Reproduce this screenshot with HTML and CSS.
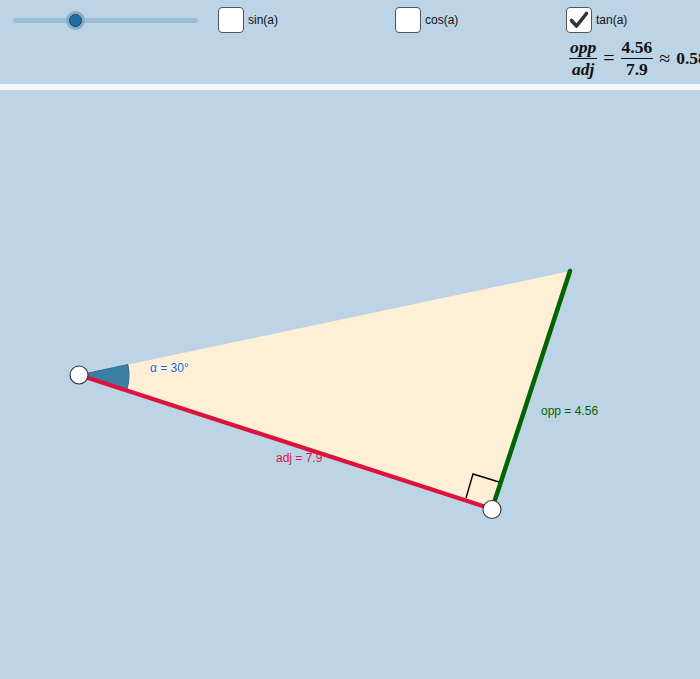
FILE: index.html
```html
<!DOCTYPE html>
<html lang="en">
<head>
<meta charset="utf-8">
<title>Tangent of an angle</title>
<link rel="stylesheet" href="styles.css">
</head>
<body>
<div class="app">
  <header class="toolbar">
    <div class="slider-cell">
      <div class="slider">
        <div class="slider-track"></div>
        <div class="slider-knob"></div>
      </div>
    </div>
    <label class="check check-sin">
      <span class="box"></span>
      <span class="check-label">sin(a)</span>
    </label>
    <label class="check check-cos">
      <span class="box"></span>
      <span class="check-label">cos(a)</span>
    </label>
    <div class="tan-cell">
      <label class="check">
        <span class="box checked">
          <svg viewBox="0 0 26 26" width="26" height="26"><path d="M5.5 13.5 L10.5 19 L20.5 6.5" fill="none" stroke="#333" stroke-width="3.6" stroke-linecap="round" stroke-linejoin="round"/></svg>
        </span>
        <span class="check-label">tan(a)</span>
      </label>
      <div class="formula">
        <span class="frac"><span class="num it">opp</span><span class="den it">adj</span></span>
        <span class="op">=</span>
        <span class="frac"><span class="num">4.56</span><span class="den">7.9</span></span>
        <span class="op">≈</span>
        <span class="val">0.58</span>
      </div>
    </div>
  </header>
  <div class="divider"></div>
  <svg class="canvas" viewBox="0 91 700 588" width="700" height="588">
    <polygon points="79,375 492,509 570,271" fill="#ffefd6"/>
    <path d="M79 375 L127.9 364.6 A50 50 0 0 1 126.6 390.4 Z" fill="#3d7fa4" stroke="#2c6a8c" stroke-width="1"/>
    <polyline points="466,498 473,474 499,482" fill="none" stroke="#000" stroke-width="1.4"/>
    <line x1="79" y1="375" x2="492" y2="509" stroke="#dc143c" stroke-width="4.2"/>
    <line x1="492" y1="509" x2="570" y2="271" stroke="#006400" stroke-width="4.5" stroke-linecap="round"/>
    <circle cx="79" cy="375" r="9" fill="#fff" stroke="#333" stroke-width="1.1"/>
    <circle cx="492" cy="509.5" r="9" fill="#fff" stroke="#333" stroke-width="1.1"/>
    <text class="lbl lbl-alpha" x="150" y="372">α = 30°</text>
    <text class="lbl lbl-adj" x="276" y="462">adj = 7.9</text>
    <text class="lbl lbl-opp" x="541" y="415">opp = 4.56</text>
  </svg>
</div>
</body>
</html>
```
FILE: styles.css
```css
html, body {
  margin: 0;
  padding: 0;
  width: 700px;
  height: 679px;
  overflow: hidden;
  background: #bdd4e7;
  font-family: "Liberation Sans", Arial, sans-serif;
}

.app {
  display: flex;
  flex-direction: column;
  width: 700px;
  height: 679px;
}

.toolbar {
  display: flex;
  align-items: flex-start;
  height: 84px;
  flex: none;
}

.slider-cell {
  width: 218px;
  flex: none;
  padding-top: 18px;
  box-sizing: border-box;
}

.slider {
  position: relative;
  margin-left: 13px;
  width: 185px;
  height: 6px;
}

.slider-track {
  height: 5px;
  border-radius: 3px;
  background: #9bbfd6;
}

.slider-knob {
  position: absolute;
  left: 56px;
  top: -4px;
  width: 11px;
  height: 11px;
  border-radius: 50%;
  background: #1f6fa3;
  border: 1px solid #22445c;
  box-shadow: 0 0 0 3px rgba(130, 170, 200, 0.9);
}

.check {
  display: flex;
  align-items: center;
  gap: 4px;
  padding-top: 7px;
  font-size: 12px;
  color: #111;
}

.check-sin { width: 177px; flex: none; }
.check-cos { width: 171px; flex: none; }

.box {
  width: 24px;
  height: 24px;
  border: 1px solid #555;
  border-radius: 4px;
  background: #fff;
  display: block;
  flex: none;
}

.box svg {
  display: block;
  margin: -1px;
}

.tan-cell {
  display: flex;
  flex-direction: column;
  flex: none;
  width: 140px;
  overflow: visible;
}

.formula {
  display: flex;
  align-items: center;
  margin-top: 6px;
  margin-left: 3px;
  font-family: "Liberation Serif", "Times New Roman", serif;
  font-weight: bold;
  font-size: 17.5px;
  color: #111;
  white-space: nowrap;
}

.frac {
  display: inline-flex;
  flex-direction: column;
  align-items: center;
  line-height: 17px;
}

.frac .num {
  border-bottom: 1.3px solid #111;
  padding: 0 1px 2px;
}

.frac .den {
  padding-top: 2px;
}

.it { font-style: italic; }

.op {
  margin: 0 6px;
  font-weight: normal;
  font-size: 20px;
}

.val { margin-left: 0; }

.divider {
  height: 6px;
  flex: none;
  background: #f6f6f6;
  border-bottom: 1px solid #d2d6d9;
}

.canvas {
  display: block;
  flex: none;
}

.lbl {
  font-family: "Liberation Sans", Arial, sans-serif;
  font-size: 12px;
}

.lbl-alpha {
  fill: #1565c0;
  stroke: rgba(255, 255, 255, 0.6);
  stroke-width: 2px;
  paint-order: stroke;
}

.lbl-adj { fill: #dc143c; }
.lbl-opp { fill: #006400; }
```
